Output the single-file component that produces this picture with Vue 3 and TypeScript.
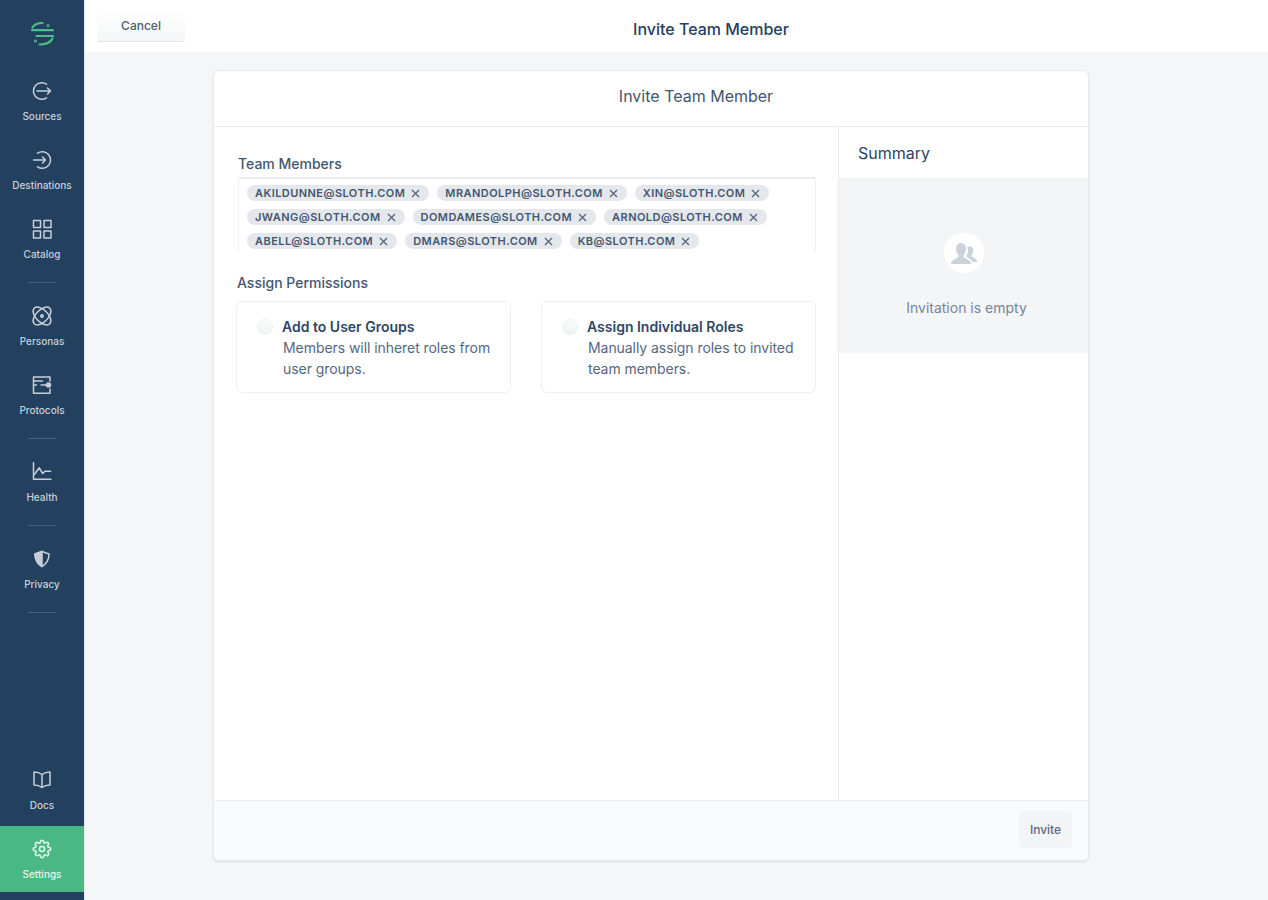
<script setup lang="ts">
interface NavItem {
  label: string
  paths: string[]
  filled?: string
  active?: boolean
  dividerAfter?: boolean
}

const gear =
  'M19.4 15a1.65 1.65 0 0 0 .33 1.82l.06.06a2 2 0 0 1 0 2.83 2 2 0 0 1-2.83 0l-.06-.06a1.65 1.65 0 0 0-1.82-.33 1.65 1.65 0 0 0-1 1.51V21a2 2 0 0 1-2 2 2 2 0 0 1-2-2v-.09A1.65 1.65 0 0 0 9 19.4a1.65 1.65 0 0 0-1.82.33l-.06.06a2 2 0 0 1-2.83 0 2 2 0 0 1 0-2.83l.06-.06a1.65 1.65 0 0 0 .33-1.82 1.65 1.65 0 0 0-1.51-1H3a2 2 0 0 1-2-2 2 2 0 0 1 2-2h.09A1.65 1.65 0 0 0 4.6 9a1.65 1.65 0 0 0-.33-1.82l-.06-.06a2 2 0 0 1 0-2.83 2 2 0 0 1 2.83 0l.06.06a1.65 1.65 0 0 0 1.82.33H9a1.65 1.65 0 0 0 1-1.51V3a2 2 0 0 1 2-2 2 2 0 0 1 2 2v.09a1.65 1.65 0 0 0 1 1.51 1.65 1.65 0 0 0 1.82-.33l.06-.06a2 2 0 0 1 2.83 0 2 2 0 0 1 0 2.83l-.06.06a1.65 1.65 0 0 0-.33 1.82V9a1.65 1.65 0 0 0 1.51 1H21a2 2 0 0 1 2 2 2 2 0 0 1-2 2h-.09a1.65 1.65 0 0 0-1.51 1z'

const topNav: NavItem[] = [
  { label: 'Sources', paths: ['M16.5 5.2A8.3 8.3 0 1 0 16.5 18.8', 'M7 12h13.5M17.5 9l3 3-3 3'] },
  { label: 'Destinations', paths: ['M7.5 5.2A8.3 8.3 0 1 1 7.5 18.8', 'M3.5 12h12M12.5 9l3 3-3 3'] },
  {
    label: 'Catalog',
    dividerAfter: true,
    paths: ['M3.5 3.5h7v7h-7zM14 3.5h7v7h-7zM3.5 14h7v7h-7zM14 14h7v7h-7z'],
  },
  {
    label: 'Personas',
    paths: [
      'M4.22 4.22A11 6 45 1 1 19.78 19.78A11 6 45 1 1 4.22 4.22z',
      'M19.78 4.22A11 6 -45 1 1 4.22 19.78A11 6 -45 1 1 19.78 4.22z',
    ],
    filled: 'M12 10.800a1.200 1.200 0 1 0 0 2.400 1.200 1.200 0 0 0 0-2.400z',
  },
  {
    label: 'Protocols',
    dividerAfter: true,
    paths: ['M20 8V4H3.500v16.300H20V16', 'M3.500 8h9M3.500 12h3M11 12h7'],
    filled: 'M18.500 10a2 2 0 1 0 0 4 2 2 0 0 0 0-4z',
  },
  {
    label: 'Health',
    dividerAfter: true,
    paths: ['M3.500 2.500V19.300h17.500', 'M4.300 14.500l5-6.700 3.400 5.700 2.300-2.300h5.700'],
  },
  {
    label: 'Privacy',
    dividerAfter: true,
    paths: ['M12 4.500l7 2.500c0 5-2 9.500-7 12.500-5-3-7-7.500-7-12.500z'],
    filled: 'M12 4.500v15c-5-3-7-7.500-7-12.500z',
  },
]

const bottomNav: NavItem[] = [
  {
    label: 'Docs',
    paths: ['M12 6.500C10 5 7 4 4 4v13c3 0 6 1 8 2.500 2-1.500 5-2.500 8-2.500V4c-3 0-6 1-8 2.500zM12 6.500v13'],
  },
  { label: 'Settings', active: true, paths: [gear] },
]

const members = [
  'akildunne@sloth.com',
  'mrandolph@sloth.com',
  'xin@sloth.com',
  'jwang@sloth.com',
  'domdames@sloth.com',
  'arnold@sloth.com',
  'abell@sloth.com',
  'dmars@sloth.com',
  'kb@sloth.com',
]

const options = [
  { title: 'Add to User Groups', text: 'Members will inheret roles from user groups.' },
  { title: 'Assign Individual Roles', text: 'Manually assign roles to invited team members.' },
]
</script>

<template>
  <div class="app">
    <aside class="sidebar">
      <div class="logo">
        <svg width="24" height="24" viewBox="0 0 24 24" fill="none" stroke="#4cbd88" stroke-width="2.200" stroke-linecap="round">
          <path d="M2 8.200h21M6.500 14h16.500" />
          <path d="M2.500 5.500C4.500 2.500 8 1 12.500 1" />
          <path d="M22.500 16.500C20.500 20.500 16.500 22.500 9.500 22.500" />
          <circle cx="18" cy="3.500" r=".5" />
          <circle cx="5.500" cy="19" r=".5" />
        </svg>
      </div>
      <nav class="nav">
        <template v-for="item in topNav" :key="item.label">
          <a class="nav-item">
            <svg class="nav-icon" width="24" height="24" viewBox="0 0 24 24" fill="none" stroke="currentColor" stroke-width="1.500" stroke-linecap="round" stroke-linejoin="round">
              <path v-for="d in item.paths" :key="d" :d="d" />
              <path v-if="item.filled" :d="item.filled" fill="currentColor" />
            </svg>
            <span>{{ item.label }}</span>
          </a>
          <div v-if="item.dividerAfter" class="nav-divider"></div>
        </template>
      </nav>
      <nav class="nav nav-bottom">
        <a v-for="item in bottomNav" :key="item.label" class="nav-item" :class="{ active: item.active }">
          <svg class="nav-icon" width="24" height="24" viewBox="0 0 24 24" fill="none" stroke="currentColor" stroke-width="1.500" stroke-linecap="round" stroke-linejoin="round">
            <g v-if="item.active" transform="translate(2.400 2.400) scale(.8)" stroke-width="1.900">
              <circle cx="12" cy="12" r="3.200" />
              <path :d="item.paths[0]" />
            </g>
            <path v-else v-for="d in item.paths" :key="d" :d="d" />
          </svg>
          <span>{{ item.label }}</span>
        </a>
      </nav>
    </aside>

    <div class="main">
      <header class="topbar">
        <button class="cancel">Cancel</button>
        <h1 class="page-title">Invite Team Member</h1>
      </header>

      <section class="card">
        <div class="card-head">Invite Team Member</div>
        <div class="card-body">
          <div class="form">
            <label class="label">Team Members</label>
            <div class="tag-box">
              <span v-for="m in members" :key="m" class="tag">
                {{ m }}
                <svg width="9" height="9" viewBox="0 0 9 9" stroke="#54667d" stroke-width="1.300" fill="none">
                  <path d="M1 1l7 7M8 1L1 8" />
                </svg>
              </span>
            </div>
            <label class="label label-perm">Assign Permissions</label>
            <div class="options">
              <div v-for="o in options" :key="o.title" class="option">
                <span class="radio"></span>
                <div class="option-copy">
                  <div class="option-title">{{ o.title }}</div>
                  <div class="option-text">{{ o.text }}</div>
                </div>
              </div>
            </div>
          </div>
          <aside class="summary">
            <div class="summary-title">Summary</div>
            <div class="empty">
              <div class="empty-icon">
                <svg width="28" height="22" viewBox="0 0 28 22" fill="#cbd2d9">
                  <path d="M20 4.500c2 0 3.300 1.700 3.300 3.800 0 2-.8 3.500-1.800 4.500v1.200c0 .8 4.500 2.500 5.500 4.500.3.700 0 1.500-.5 1.500h-4c-1-2.500-4-4-6-5v-1.500c1-1.300 1.500-3 1.500-5 0-1.500-.3-2.500-1-3.300.8-.500 1.800-.700 3-.700z" />
                  <path d="M11 1c3 0 5 2.400 5 5.800 0 2.600-1 4.700-2.400 6V15c0 1 7.400 2.500 7.400 6.500 0 .3-.2.500-.5.500H1.500c-.3 0-.5-.2-.5-.5C1 17.500 8.400 16 8.400 15v-2.200C7 11.500 6 9.400 6 6.800 6 3.400 8 1 11 1z" />
                </svg>
              </div>
              <p>Invitation is empty</p>
            </div>
          </aside>
        </div>
        <footer class="card-foot">
          <button class="invite">Invite</button>
        </footer>
      </section>
    </div>
  </div>
</template>

<style scoped>
.app {
  display: flex;
  height: 900px;
  background: #f5f6f8;
  font-family: Inter, 'Liberation Sans', sans-serif;
  color: #24405e;
}
.sidebar {
  width: 84px;
  flex: none;
  display: flex;
  flex-direction: column;
  background: #23415f;
  padding-bottom: 8px;
  box-sizing: border-box;
}
.logo {
  height: 68px;
  display: flex;
  justify-content: center;
  padding-top: 22px;
  box-sizing: border-box;
}
.nav {
  display: flex;
  flex-direction: column;
}
.nav-bottom {
  margin-top: auto;
}
.nav-item {
  height: 66px;
  margin-bottom: 3px;
  padding-top: 11px;
  box-sizing: border-box;
  display: flex;
  flex-direction: column;
  align-items: center;
  color: #c6cfd9;
  font-size: 10px;
  font-weight: 500;
  line-height: 14px;
}
.nav-item span {
  margin-top: 6px;
}
.nav-icon {
  display: block;
  flex: none;
}
.nav-item.active {
  background: #49b882;
  color: #e6f6ee;
  margin-bottom: 0;
}
.nav-divider {
  width: 28px;
  height: 1px;
  margin: 7px auto 10px;
  background: #45607b;
}
.main {
  flex: 1;
  min-width: 0;
  border-left: 1px solid #e4e8ee;
}
.topbar {
  height: 52px;
  display: flex;
  align-items: flex-start;
  padding: 10px 31px 0 12px;
  box-sizing: border-box;
  background: #fff;
}
.cancel {
  width: 88px;
  height: 32px;
  flex: none;
  border: 0;
  border-bottom: 1px solid #e3e6ea;
  border-radius: 2px;
  background: linear-gradient(#fff, #f4f5f7);
  color: #4f5f73;
  font: 500 12px Inter, sans-serif;
}
.page-title {
  flex: 1;
  margin: 9px 0 0;
  text-align: center;
  font-size: 16px;
  line-height: 20px;
  font-weight: 500;
  color: #24405e;
}
.card {
  width: 876px;
  height: 791px;
  margin: 18px 0 0 128px;
  box-sizing: border-box;
  display: flex;
  flex-direction: column;
  background: #fff;
  border: 1px solid #e9ebef;
  border-radius: 6px;
  box-shadow: 0 1px 2px rgba(40, 60, 80, 0.14);
  overflow: hidden;
}
.card-head {
  height: 56px;
  flex: none;
  box-sizing: border-box;
  display: flex;
  align-items: center;
  justify-content: center;
  border-bottom: 1px solid #e9ebef;
  font-size: 16px;
  color: #43566f;
  padding: 0 0 6px 90px;
}
.card-body {
  flex: 1;
  display: flex;
  min-height: 0;
}
.form {
  width: 625px;
  flex: none;
  box-sizing: border-box;
  padding: 28px 22px 0 23px;
  border-right: 1px solid #e9ebef;
}
.label {
  display: block;
  font-size: 14px;
  line-height: 17px;
  font-weight: 500;
  color: #43566f;
  margin-left: 1px;
}
.tag-box {
  margin: 5px 0 0 1px;
  height: 74px;
  box-sizing: border-box;
  display: flex;
  flex-wrap: wrap;
  align-content: flex-start;
  gap: 8px;
  padding: 6px 8px 0;
  border: 1px solid #f0f1f4;
  border-top: 2px solid #e9ebef;
  border-bottom: 0;
  border-radius: 3px 3px 0 0;
}
.tag {
  height: 16px;
  display: inline-flex;
  align-items: center;
  gap: 6px;
  padding: 0 9px 0 8px;
  border-radius: 8px;
  background: #e4e7ec;
  color: #43566f;
  font-size: 11px;
  font-weight: 600;
  letter-spacing: 0.45px;
  text-transform: uppercase;
  white-space: nowrap;
}
.label-perm {
  margin: 23px 0 0;
}
.options {
  display: grid;
  grid-template-columns: 275px 275px;
  gap: 30px;
  margin-top: 10px;
  margin-left: -1px;
}
.option {
  height: 92px;
  box-sizing: border-box;
  display: flex;
  padding: 16px 16px 0 20px;
  border: 1px solid #eff0f3;
  border-radius: 6px;
}
.radio {
  width: 16px;
  height: 16px;
  flex: none;
  margin-top: 1px;
  border-radius: 50%;
  background: linear-gradient(#fafbfc, #f0f2f4);
  border: 1px solid #eef0f2;
  box-sizing: border-box;
}
.option-copy {
  margin-left: 9px;
}
.option-title {
  font-size: 14px;
  line-height: 17px;
  font-weight: 600;
  color: #2d4766;
}
.option-text {
  margin: 2px 0 0 1px;
  font-size: 14px;
  line-height: 21px;
  letter-spacing: -0.06px;
  color: #54687f;
}
.summary {
  flex: 1;
  min-width: 0;
}
.summary-title {
  height: 51px;
  line-height: 53px;
  padding-left: 19px;
  font-size: 16px;
  font-weight: 400;
  color: #2a4563;
}
.empty {
  height: 175px;
  box-sizing: border-box;
  padding-top: 55px;
  background: #f4f5f7;
  text-align: center;
}
.empty-icon {
  width: 40px;
  height: 40px;
  margin: 0 auto 0 105px;
  border-radius: 50%;
  background: #fff;
  display: flex;
  align-items: center;
  justify-content: center;
}
.empty p {
  margin: 26px 0 0;
  padding-left: 6px;
  font-size: 14px;
  line-height: 17px;
  color: #76869a;
}
.card-foot {
  height: 60px;
  flex: none;
  box-sizing: border-box;
  display: flex;
  justify-content: flex-end;
  align-items: flex-start;
  padding: 10px 16px 0 0;
  background: #f9fafb;
  border-top: 1px solid #e9ebef;
}
.invite {
  width: 53px;
  height: 37px;
  border: 0;
  border-radius: 4px;
  background: #f3f4f6;
  color: #5a6a7e;
  font: 500 12px Inter, sans-serif;
}
</style>

<style>
body {
  margin: 0;
  background: #f5f6f8;
}
</style>
